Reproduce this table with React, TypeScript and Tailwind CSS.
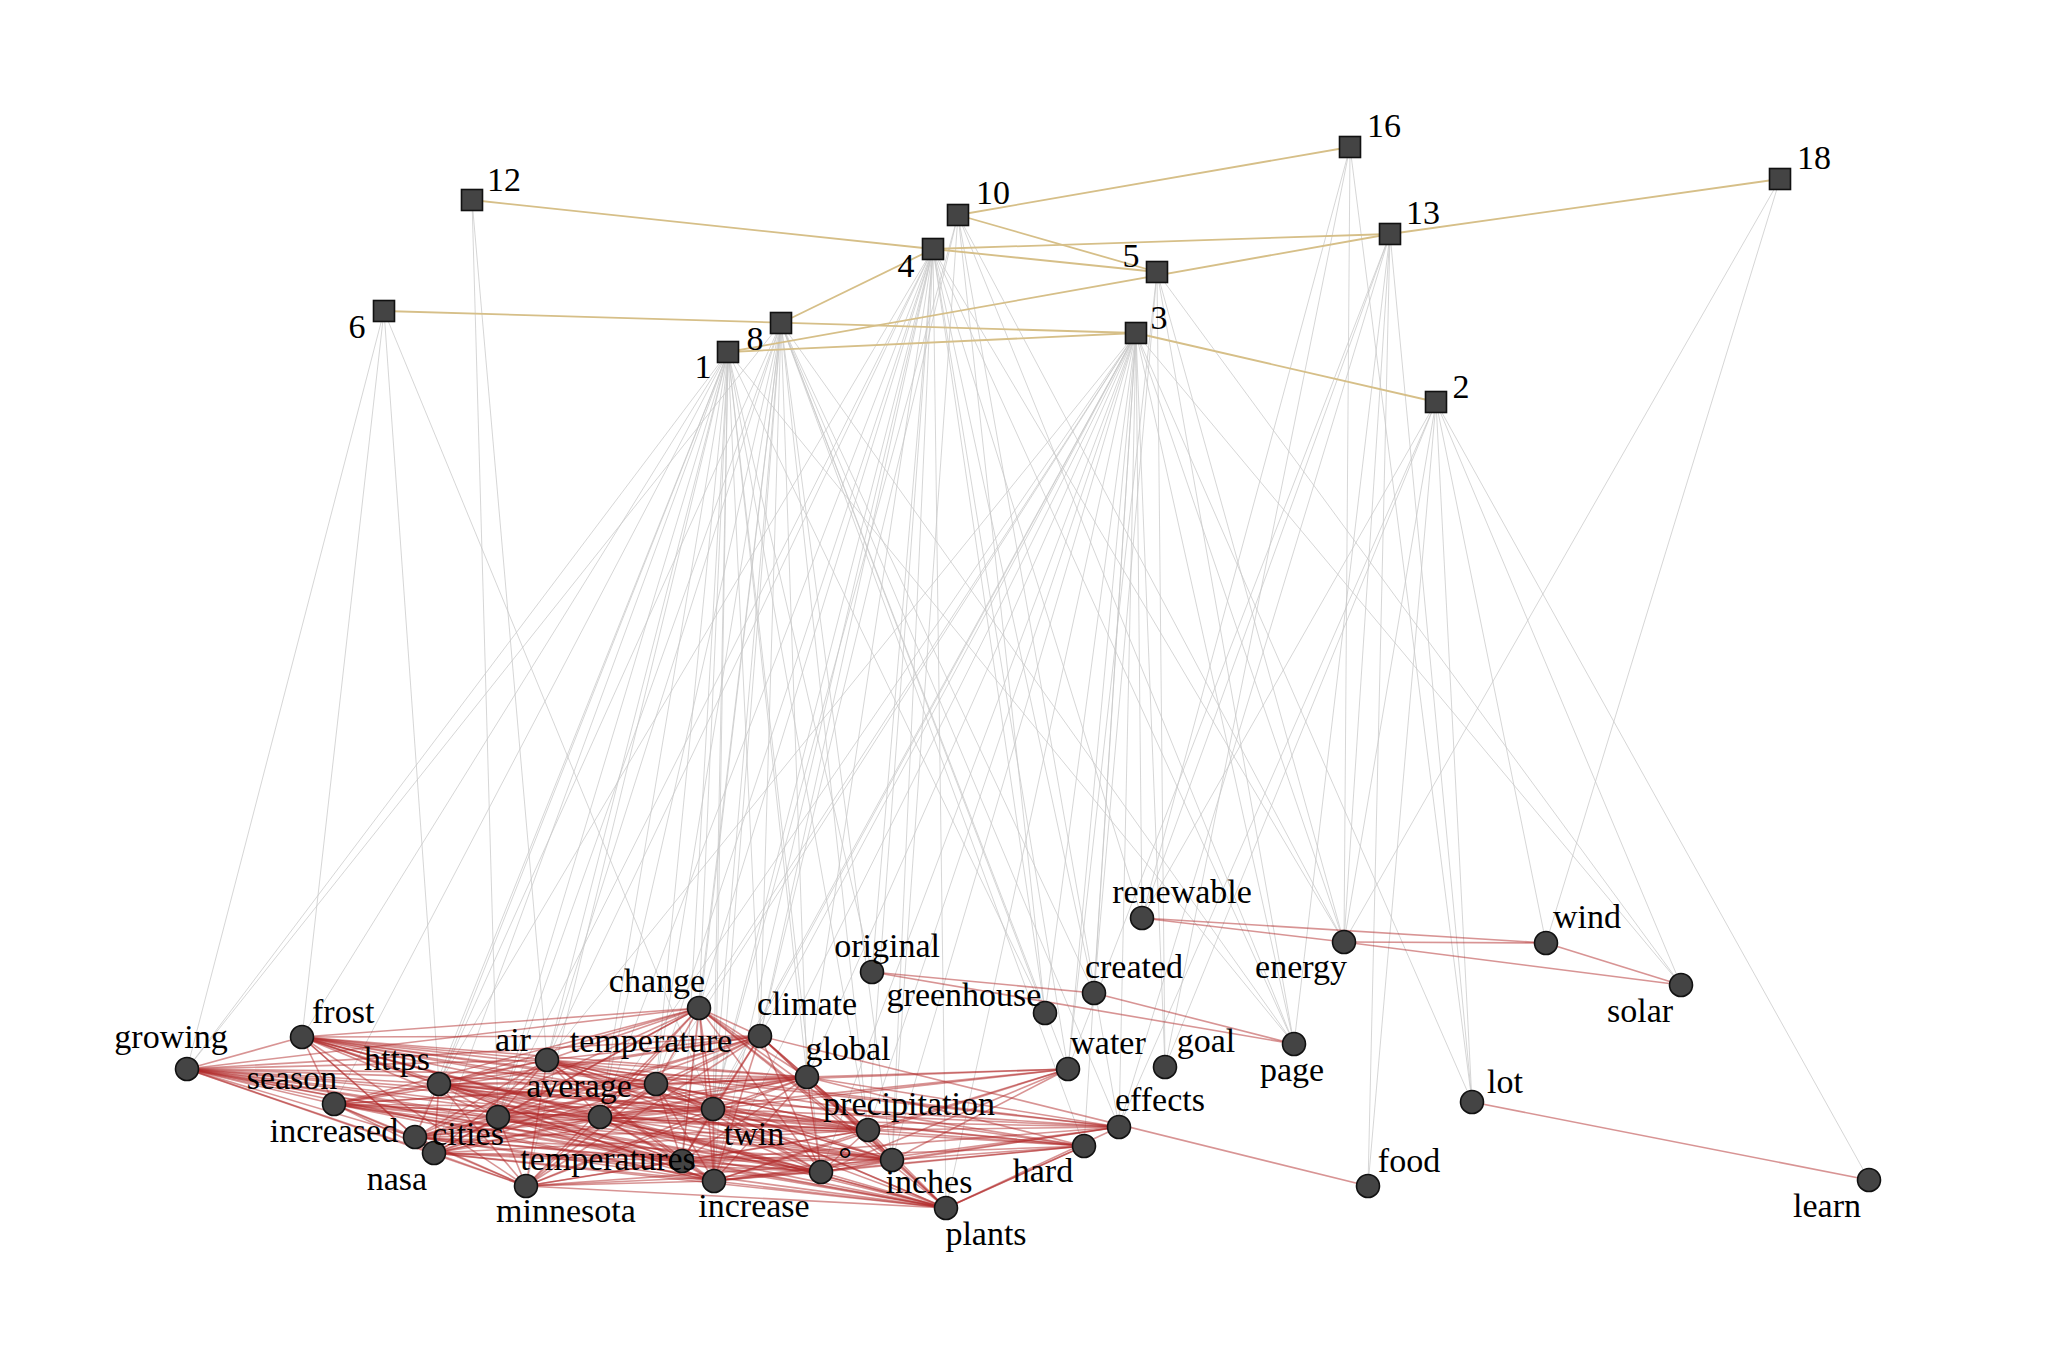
const words: Record<string, [number, number]> = {
  growing: [187, 1069],
  frost: [302, 1037],
  season: [334, 1104],
  https: [439, 1084],
  air: [547, 1060],
  increased: [415, 1137],
  nasa: [434, 1153],
  cities: [498, 1117],
  minnesota: [526, 1186],
  average: [600, 1117],
  temperature: [656, 1084],
  change: [699, 1008],
  climate: [760, 1036],
  global: [807, 1077],
  twin: [713, 1109],
  temperatures: [682, 1161],
  increase: [714, 1181],
  precip: [868, 1130],
  degree: [821, 1172],
  inches: [892, 1160],
  plants: [946, 1208],
  hard: [1084, 1146],
  effects: [1119, 1127],
  water: [1068, 1069],
  greenhouse: [1045, 1013],
  original: [872, 972],
  created: [1094, 993],
  renewable: [1142, 918],
  energy: [1344, 942],
  page: [1294, 1044],
  goal: [1165, 1067],
  wind: [1546, 943],
  solar: [1681, 985],
  lot: [1472, 1102],
  food: [1368, 1186],
  learn: [1869, 1180],
};

// text, x, baseline, anchor
const wordLabels: [string, number, number, "start" | "middle" | "end"][] = [
  ["growing", 171, 1048, "middle"],
  ["frost", 312, 1023, "start"],
  ["season", 292, 1089, "middle"],
  ["https", 397, 1070, "middle"],
  ["air", 513, 1051, "middle"],
  ["increased", 334, 1142, "middle"],
  ["cities", 468, 1145, "middle"],
  ["nasa", 397, 1190, "middle"],
  ["minnesota", 566, 1222, "middle"],
  ["change", 657, 992, "middle"],
  ["climate", 807, 1015, "middle"],
  ["temperature", 651, 1052, "middle"],
  ["average", 579, 1097, "middle"],
  ["global", 848, 1060, "middle"],
  ["twin", 754, 1145, "middle"],
  ["precipitation", 909, 1115, "middle"],
  ["°", 845, 1170, "middle"],
  ["inches", 929, 1193, "middle"],
  ["temperatures", 608, 1170, "middle"],
  ["increase", 754, 1217, "middle"],
  ["plants", 986, 1245, "middle"],
  ["greenhouse", 964, 1006, "middle"],
  ["original", 940, 957, "end"],
  ["created", 1134, 978, "middle"],
  ["renewable", 1182, 903, "middle"],
  ["energy", 1301, 978, "middle"],
  ["page", 1292, 1081, "middle"],
  ["water", 1108, 1054, "middle"],
  ["goal", 1206, 1052, "middle"],
  ["effects", 1160, 1111, "middle"],
  ["hard", 1043, 1182, "middle"],
  ["wind", 1587, 928, "middle"],
  ["solar", 1640, 1022, "middle"],
  ["lot", 1505, 1093, "middle"],
  ["food", 1409, 1172, "middle"],
  ["learn", 1827, 1217, "middle"],
];

const docs: Record<string, [number, number]> = {
  "12": [472, 200],
  "10": [958, 215],
  "4": [933, 249],
  "5": [1157, 272],
  "6": [384, 311],
  "8": [781, 323],
  "1": [728, 352],
  "3": [1136, 333],
  "16": [1350, 147],
  "13": [1390, 234],
  "2": [1436, 402],
  "18": [1780, 179],
};

const docLabels: [string, number, number][] = [
  ["12", 504, 191],
  ["10", 993, 204],
  ["4", 906, 277],
  ["5", 1131, 267],
  ["6", 357, 338],
  ["8", 755, 350],
  ["1", 703, 378],
  ["3", 1159, 329],
  ["16", 1384, 137],
  ["13", 1423, 224],
  ["2", 1461, 398],
  ["18", 1814, 169],
];

const docEdges: [string, string][] = [
  ["12", "4"],
  ["10", "16"],
  ["10", "5"],
  ["4", "13"],
  ["4", "5"],
  ["4", "8"],
  ["13", "1"],
  ["6", "3"],
  ["1", "3"],
  ["3", "2"],
  ["13", "18"],
];

const docWords: Record<string, string[]> = {
  "1": ["growing", "frost", "season", "https", "air", "increased", "nasa", "cities", "minnesota", "average", "temperature", "change", "climate", "twin", "temperatures", "increase", "global", "degree", "precip", "original", "greenhouse", "page"],
  "8": ["growing", "https", "air", "cities", "average", "temperature", "change", "climate", "twin", "temperatures", "increase", "global", "precip", "inches", "greenhouse", "created", "water", "effects", "page", "hard"],
  "6": ["growing", "frost", "https", "twin"],
  "12": ["air", "cities"],
  "4": ["https", "air", "cities", "average", "temperature", "change", "climate", "global", "twin", "increase", "precip", "inches", "plants", "original", "greenhouse", "created", "water", "renewable", "energy", "page"],
  "10": ["climate", "twin", "greenhouse", "effects", "page", "inches", "energy"],
  "5": ["page", "energy", "goal", "water", "solar", "created"],
  "3": ["air", "average", "temperature", "change", "climate", "global", "twin", "temperatures", "increase", "precip", "degree", "inches", "plants", "hard", "effects", "water", "goal", "created", "greenhouse", "page", "energy", "lot", "solar", "renewable"],
  "16": ["renewable", "energy", "goal", "lot"],
  "13": ["water", "effects", "renewable", "energy", "lot", "page", "food"],
  "2": ["effects", "goal", "food", "lot", "energy", "wind", "solar", "learn", "renewable"],
  "18": ["energy", "wind"],
};

const core = [
  "growing", "frost", "season", "https", "air", "increased", "nasa", "cities", "minnesota", "average",
  "temperature", "change", "climate", "global", "twin", "temperatures", "increase", "precip", "degree", "inches", "plants",
];

const wordEdges: [string, string][] = [];
core.forEach((a, i) => core.slice(i + 1).forEach((b) => wordEdges.push([a, b])));
["frost", "https", "air", "average", "global", "precip", "degree", "inches", "twin", "increase", "temperatures", "plants"].forEach((w) =>
  wordEdges.push([w, "hard"], [w, "effects"])
);
["precip", "degree", "inches", "twin", "global", "temperature", "average", "increase"].forEach((w) => wordEdges.push([w, "water"]));
wordEdges.push(
  ["hard", "plants"],
  ["climate", "food"],
  ["original", "created"],
  ["original", "page"],
  ["created", "page"],
  ["renewable", "energy"],
  ["renewable", "wind"],
  ["energy", "wind"],
  ["energy", "solar"],
  ["wind", "solar"],
  ["lot", "learn"]
);

const font = "'Liberation Serif', 'Times New Roman', serif";

export default function App() {
  return (
    <div className="w-[2048px] h-[1365px] bg-white overflow-hidden">
      <svg width={2048} height={1365} className="block">
        {/* document → word links */}
        {Object.entries(docWords).flatMap(([d, ws]) =>
          ws.map((w) => (
            <line
              key={`g-${d}-${w}`}
              x1={docs[d][0]}
              y1={docs[d][1]}
              x2={words[w][0]}
              y2={words[w][1]}
              stroke="#c8c8c8"
              strokeOpacity={0.75}
              strokeWidth={1}
            />
          ))
        )}

        {/* document ↔ document */}
        {docEdges.map(([a, b]) => (
          <line
            key={`d-${a}-${b}`}
            x1={docs[a][0]}
            y1={docs[a][1]}
            x2={docs[b][0]}
            y2={docs[b][1]}
            stroke="#d6bf88"
            strokeWidth={1.8}
          />
        ))}

        {/* word ↔ word */}
        {wordEdges.map(([a, b], i) => (
          <line
            key={`w-${i}`}
            x1={words[a][0]}
            y1={words[a][1]}
            x2={words[b][0]}
            y2={words[b][1]}
            stroke="#b22a2a"
            strokeOpacity={0.5}
            strokeWidth={1.6}
          />
        ))}

        {Object.entries(docs).map(([d, [x, y]]) => (
          <rect key={d} x={x - 10.5} y={y - 10.5} width={21} height={21} fill="#444" stroke="#111" strokeWidth={1.6} />
        ))}

        {Object.entries(words).map(([w, [x, y]]) => (
          <circle key={w} cx={x} cy={y} r={11.5} fill="#444" stroke="#111" strokeWidth={1.6} />
        ))}

        {docLabels.map(([t, x, y]) => (
          <text key={`dl-${t}`} x={x} y={y} textAnchor="middle" fontFamily={font} fontSize={34} fill="#000">
            {t}
          </text>
        ))}

        {wordLabels.map(([t, x, y, anchor]) => (
          <text key={`wl-${t}`} x={x} y={y} textAnchor={anchor} fontFamily={font} fontSize={34} fill="#000">
            {t}
          </text>
        ))}
      </svg>
    </div>
  );
}
